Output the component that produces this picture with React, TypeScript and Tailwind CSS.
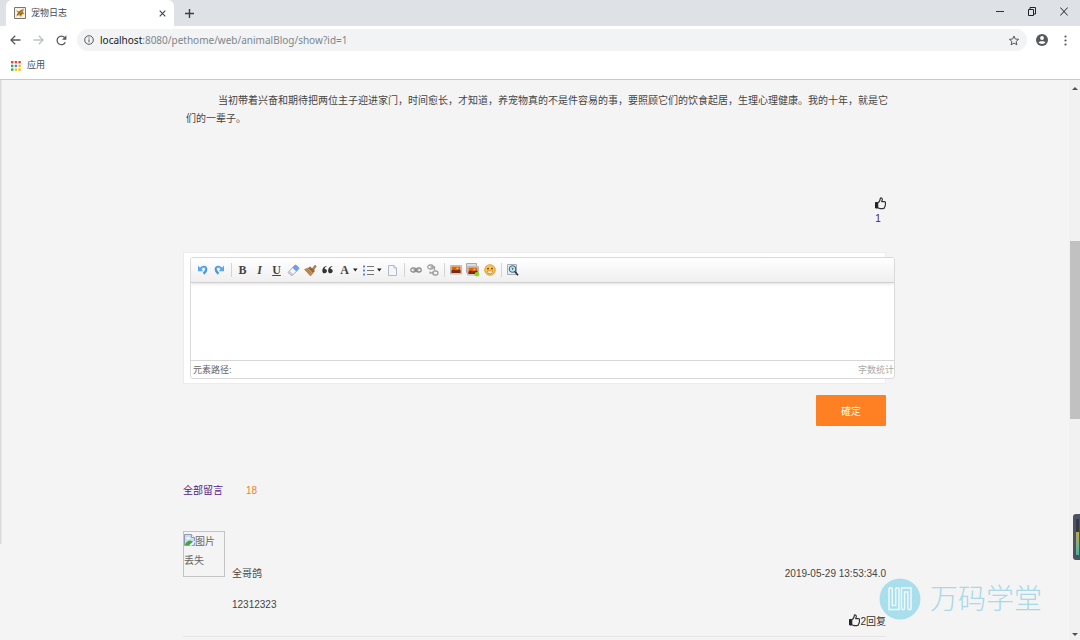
import type { ReactNode } from "react";

const APP_DOTS = ["#ea4335", "#ea4335", "#ea4335", "#34a853", "#4285f4", "#fbbc05", "#34a853", "#fbbc05", "#fbbc05"];

function ThumbUp() {
  return (
    <svg width="11" height="13" viewBox="0 0 11 13" fill="none" stroke="#333" strokeLinejoin="round" aria-hidden="true">
      <path d="M.5 5.500h2.300v5.500H.5z" fill="#222" stroke="#222" />
      <path d="M2.800 5.700C4 5.200 4.700 4 5 3L5.400 1C6.800.7 7.500 1.700 7.200 3L6.700 4.700h2.600c1.300 0 1.600 1.100 1 1.900.4.600.3 1.400-.2 1.800.2.700 0 1.300-.5 1.600 0 1-.6 1.700-1.700 1.700H6.200c-1.200 0-2.200-.5-3.400-.8" strokeWidth="1.200" />
    </svg>
  );
}

function Tool({ label, children, caret }: { label: string; children: ReactNode; caret?: boolean }) {
  return (
    <button type="button" aria-label={label} title={label} className="flex h-4 shrink-0 items-center">
      <span className="flex w-[17px] items-center justify-center">{children}</span>
      {caret && (
        <svg width="7" height="4" viewBox="0 0 7 4" aria-hidden="true">
          <path d="M0 .5h4.600L2.300 3.500z" fill="#222" />
        </svg>
      )}
    </button>
  );
}

function Separator() {
  return (
    <span className="flex w-[6px] shrink-0 justify-center">
      <span className="h-[14px] w-px bg-[#d4d4d4]" />
    </span>
  );
}

function Undo({ flip }: { flip?: boolean }) {
  return (
    <svg width="11" height="12" viewBox="0 0 11 12" className={flip ? "-scale-x-100" : ""} aria-hidden="true">
      <path d="M3.500 5C5 2.300 9 2 9.200 5.300c0 1.900-1 3.200-2.700 4.400" fill="none" stroke="#4a98e0" strokeWidth="2.400" />
      <path d="M4 4.700C5.500 2.700 8.600 2.700 8.700 5.300" fill="none" stroke="#8cc6f5" />
      <path d="M1 1.500v5.700h5.300z" fill="#5aa6ea" />
    </svg>
  );
}

function Picture() {
  return (
    <>
      <path d="M.5 1.500h11v8.500H.5z" fill="#ddd" stroke="#bbb" />
      <path d="M1.500 2.500h9v6.500h-9z" fill="#e0640f" />
      <path d="M1.500 6.500l2.500-1 2 1 1.500-1 3 .5v3h-9z" fill="#7a2d0c" />
      <circle cx="7.500" cy="4.500" r="1.100" fill="#ffc04a" />
    </>
  );
}

function EditorToolbar() {
  return (
    <div className="flex h-[25px] items-center border-b border-[#d0d0d0] bg-linear-to-b from-white to-[#efefef] pl-[3px] font-['Liberation_Serif',serif] text-xs leading-4 text-[#444] shadow-[0_1px_3px_rgba(0,0,0,0.12)]">
      <Tool label="撤销"><Undo /></Tool>
      <Tool label="重做"><Undo flip /></Tool>
      <Separator />
      <Tool label="加粗"><b>B</b></Tool>
      <Tool label="斜体"><i className="font-bold">I</i></Tool>
      <Tool label="下划线"><span className="font-bold underline">U</span></Tool>
      <Tool label="清除格式">
        <svg width="13" height="13" viewBox="0 0 13 13" aria-hidden="true">
          <path d="M1 8.500L7.500 1.500Q8.500.6 9.600 1.500L11.400 3.200Q12.200 4.200 11.400 5.200L5 11.800z" fill="#f5f6fa" stroke="#8790a5" strokeWidth=".8" />
          <path d="M5.500 3.700L7.500 1.500Q8.500.6 9.600 1.500L11.400 3.200Q12.200 4.200 11.400 5.200L9.300 7.400z" fill="#6d9ff0" />
          <path d="M1 8.500l4 3.300 1.500-1.500-4-3.400z" fill="#c9ccd4" />
        </svg>
      </Tool>
      <Tool label="格式刷">
        <svg width="13" height="13" viewBox="0 0 13 13" aria-hidden="true">
          <path d="M8 5L11 1.200l1.200 1L9.500 6.300z" fill="#bd8647" stroke="#80542a" strokeWidth=".6" />
          <path d="M6 2.500l5 4.500-2 2-5.200-4.500z" fill="#8c6848" />
          <path d="M4.200 4l5 4.700L6.500 12 .6 5.500z" fill="#d39c53" stroke="#95622b" strokeWidth=".6" />
          <path d="M3 5l4.500 4.500M2 5.600l4.300 4.600" stroke="#855321" strokeWidth=".5" />
        </svg>
      </Tool>
      <Tool label="引用">
        <svg width="11" height="8" viewBox="0 0 11 8" fill="#333" aria-hidden="true">
          <path d="M4.600.5C3.200 1 2.600 2 2.700 3c1.400-.1 2.200.8 2.200 2S4 7.300 2.700 7.300C1.200 7.300.3 6.300.3 4.700.3 2.300 2 .5 4.600.1zM10.400.5C9 1 8.400 2 8.500 3c1.400-.1 2.200.8 2.200 2s-.9 2.300-2.200 2.300C7 7.300 6.100 6.300 6.100 4.700c0-2.400 1.700-4.200 4.300-4.600z" />
        </svg>
      </Tool>
      <Tool label="字体颜色" caret><b>A</b></Tool>
      <Tool label="无序列表" caret>
        <svg width="11" height="11" viewBox="0 0 11 11" aria-hidden="true">
          <path d="M0 .5h2v2H0zM0 4.500h2v2H0zM0 8.500h2v2H0z" fill="#5b83ee" />
          <path d="M4 1.500h7M4 5.500h7M4 9.500h7" stroke="#777" />
        </svg>
      </Tool>
      <Tool label="清空文档">
        <svg width="9" height="11" viewBox="0 0 9 11" aria-hidden="true">
          <path d="M.5.5h5.500l2.500 2.500v7.500h-8z" fill="#f3f6fb" stroke="#b4b9c3" />
          <path d="M6 .5v2.500h2.500" fill="#dde2ec" stroke="#b4b9c3" />
        </svg>
      </Tool>
      <Separator />
      <Tool label="超链接">
        <svg width="12" height="6" viewBox="0 0 12 6" fill="none" stroke="#8c8c8c" strokeWidth="1.300" aria-hidden="true">
          <rect x=".8" y="1" width="5" height="4" rx="2" />
          <rect x="6.200" y="1" width="5" height="4" rx="2" />
          <path d="M3.500 3h5" />
        </svg>
      </Tool>
      <Tool label="取消链接">
        <svg width="12" height="12" viewBox="0 0 12 12" fill="none" stroke="#a0a0a0" strokeWidth="1.300" aria-hidden="true">
          <rect x=".8" y="1" width="5.400" height="4" rx="2" />
          <rect x="5.800" y="7" width="5.200" height="4" rx="2" />
          <path d="M3.500 3h4v3M3 7.500v1.500h4" />
        </svg>
      </Tool>
      <Separator />
      <Tool label="单图上传">
        <svg width="12" height="12" viewBox="0 0 12 12" aria-hidden="true"><Picture /></svg>
      </Tool>
      <Tool label="多图上传">
        <svg width="14" height="14" viewBox="0 0 14 14" aria-hidden="true">
          <path d="M.5.5h10v9H.5z" fill="#ddd" stroke="#aaa" />
          <g transform="translate(1 2)"><Picture /></g>
          <circle cx="11" cy="11.300" r="2.300" fill="#8fd61e" />
        </svg>
      </Tool>
      <Tool label="表情">
        <svg width="12" height="12" viewBox="0 0 12 12" aria-hidden="true">
          <circle cx="6" cy="6" r="5.300" fill="#fbc44e" stroke="#dc8f2c" strokeWidth=".8" />
          <circle cx="4" cy="4.600" r=".9" fill="#6b3810" />
          <circle cx="8" cy="4.600" r=".9" fill="#6b3810" />
          <path d="M3 7h6Q8.500 9.800 6 9.800T3 7z" fill="#fff" stroke="#b16a1c" strokeWidth=".6" />
        </svg>
      </Tool>
      <Separator />
      <Tool label="预览">
        <svg width="12" height="12" viewBox="0 0 12 12" aria-hidden="true">
          <path d="M.5.5h9v10h-9z" fill="#e6ecf3" stroke="#a4b0bf" />
          <circle cx="5.500" cy="5" r="3.200" fill="#cbe7f5" stroke="#4e6579" strokeWidth="1.100" />
          <path d="M4.500 3.300l2.300 1.300-1.500 2z" fill="#35845e" />
          <path d="M7.800 7.500l3.200 3.700" stroke="#333" strokeWidth="1.700" />
        </svg>
      </Tool>
    </div>
  );
}

function BrowserBar() {
  return (
    <header className="shrink-0 border-b border-[#c8c8c8] bg-white text-[#5f6368]">
      <div className="flex h-[26px] items-stretch bg-[#dee1e6] pl-[6px]">
        <div className="flex w-[168px] items-center rounded-t-md bg-white px-2">
          <svg width="12" height="12" viewBox="0 0 12 12" aria-hidden="true">
            <path d="M.5.5h11v11H.5z" fill="#f4f1e8" stroke="#777" />
            <path d="M2 3l2.500 1.200L7 3.500 10 1.500 9 5l1.500 2-2.500.5-1 2.500-2-2L2 9.500 4 6z" fill="#c18a28" />
            <path d="M8 2.500L3 8M8.500 6L6 7.500" stroke="#594427" strokeWidth=".8" />
          </svg>
          <span className="ml-[5px] grow pt-[2px] text-[9px] text-[#45494d]">宠物日志</span>
          <button type="button" aria-label="关闭标签页">
            <svg width="7" height="7" viewBox="0 0 7 7" stroke="#45494d" strokeWidth="1.200" aria-hidden="true"><path d="M.7.7l5.600 5.600M6.300.7L.7 6.300" /></svg>
          </button>
        </div>
        <button type="button" aria-label="新标签页" className="ml-[11px]">
          <svg width="9" height="9" viewBox="0 0 9 9" stroke="#3c4043" strokeWidth="1.400" aria-hidden="true"><path d="M4.500 0v9M0 4.500h9" /></svg>
        </button>
        <div className="ml-auto flex items-center pb-[3px]">
          <button type="button" aria-label="最小化" className="flex w-8 justify-center">
            <svg width="8" height="8" viewBox="0 0 8 8" stroke="#333" aria-hidden="true"><path d="M0 3.500h8" /></svg>
          </button>
          <button type="button" aria-label="还原" className="flex w-8 justify-center">
            <svg width="8" height="9" viewBox="0 0 8 9" fill="none" stroke="#222" aria-hidden="true"><path d="M.5 2.500h5v6h-5zM2 2.500v-2h5.500v6.500h-2" /></svg>
          </button>
          <button type="button" aria-label="关闭" className="flex w-8 justify-center">
            <svg width="8" height="9" viewBox="0 0 8 9" stroke="#222" aria-hidden="true"><path d="M.3.500l7.400 8M7.700.5l-7.400 8" /></svg>
          </button>
        </div>
      </div>

      <div className="flex h-[28px] items-center pr-[13px] pl-[10px]">
        <button type="button" aria-label="后退" className="mr-3">
          <svg width="11" height="10" viewBox="0 0 11 10" fill="none" stroke="#55595d" strokeWidth="1.300" aria-hidden="true"><path d="M10.500 5H1.200M5.200.8L1 5l4.200 4.200" /></svg>
        </button>
        <button type="button" aria-label="前进" className="mr-3">
          <svg width="11" height="10" viewBox="0 0 11 10" fill="none" stroke="#bdc1c6" strokeWidth="1.300" aria-hidden="true"><path d="M.5 5h9.300M5.800.8L10 5 5.800 9.200" /></svg>
        </button>
        <button type="button" aria-label="重新加载" className="mr-[10px]">
          <svg width="11" height="11" viewBox="0 0 11 11" aria-hidden="true">
            <path d="M9.300 7.200A4.300 4.300 0 1 1 8.600 2.500" fill="none" stroke="#55595d" strokeWidth="1.300" />
            <path d="M10.400.3v4.400H6z" fill="#55595d" />
          </svg>
        </button>
        <div className="flex h-[22px] grow items-center rounded-full bg-[#f1f3f4] px-[7px]">
          <svg width="10" height="10" viewBox="0 0 10 10" fill="none" stroke="#55595d" aria-hidden="true">
            <circle cx="5" cy="5" r="4.300" />
            <path d="M5 4.300v3M5 2.400v1.100" />
          </svg>
          <span className="ml-[6px] grow font-['Noto_Sans',sans-serif] text-[10px] text-[#80868b]">
            <span className="text-[#202124]">localhost</span>:8080/pethome/web/animalBlog/show?id=1
          </span>
          <button type="button" aria-label="收藏">
            <svg width="12" height="11" viewBox="0 0 12 11" fill="none" stroke="#55595d" aria-hidden="true">
              <path d="M6 1l1.300 3 3.300.3L8.100 6.500l.8 3.300L6 8.100 3.100 9.800l.8-3.300L1.400 4.300 4.700 4z" />
            </svg>
          </button>
        </div>
        <button type="button" aria-label="用户" className="ml-[9px]">
          <svg width="12" height="12" viewBox="0 0 12 12" aria-hidden="true">
            <circle cx="6" cy="6" r="6" fill="#55595d" />
            <circle cx="6" cy="4" r="1.900" fill="#fff" />
            <path d="M2.500 8.600C3.500 6.700 8.500 6.700 9.500 8.600 8 10.500 4 10.500 2.500 8.600z" fill="#fff" />
          </svg>
        </button>
        <button type="button" aria-label="菜单" className="ml-4">
          <svg width="3" height="11" viewBox="0 0 3 11" fill="#55595d" aria-hidden="true">
            <circle cx="1.500" cy="1.500" r="1.100" /><circle cx="1.500" cy="5.500" r="1.100" /><circle cx="1.500" cy="9.500" r="1.100" />
          </svg>
        </button>
      </div>

      <div className="flex h-[25px] items-center pb-[2px] pl-[11px]">
        <a href="#apps" className="flex items-center gap-[6px] text-[9px] text-[#45494d]">
          <svg width="10" height="10" viewBox="0 0 10 10" aria-hidden="true">
            {APP_DOTS.map((color, i) => (
              <rect key={i} x={(i % 3) * 3.7} y={Math.floor(i / 3) * 3.7} width="2.400" height="2.400" fill={color} />
            ))}
          </svg>
          应用
        </a>
      </div>
    </header>
  );
}

function Scrollbar() {
  return (
    <div className="relative flex w-[11px] shrink-0 flex-col items-center bg-[#f1f1f1]" aria-hidden="true">
      <svg width="6" height="3" viewBox="0 0 6 3" className="mt-[7px] shrink-0"><path d="M0 3L3 0l3 3z" fill="#505050" /></svg>
      <div className="basis-[151px]" />
      <div className="h-[178px] w-[10px] shrink-0 bg-[#c1c1c1]" />
      <svg width="6" height="3" viewBox="0 0 6 3" className="mt-auto mb-[4px] shrink-0"><path d="M0 0l3 3 3-3z" fill="#505050" /></svg>
      {/* desktop volume meter docked on the screen edge */}
      <div className="absolute right-0 bottom-[80px] h-[46px] w-[7px] rounded-l-[3px] bg-[#4d5162] py-[5px] pl-[3px]">
        <div className="h-full w-[3px] bg-linear-to-b from-[#353846] from-35% via-[#b8a94d] via-35% to-[#3fb39b]" />
      </div>
    </div>
  );
}

function Watermark() {
  return (
    <div className="pointer-events-none absolute right-[38px] bottom-[19px] flex items-center gap-[9px]">
      <svg width="42" height="42" viewBox="0 0 42 42" fill="none" aria-hidden="true">
        <circle cx="21" cy="21" r="20.500" fill="#a9dfed" />
        <path d="M10 10v21.500h10V10M13.300 10v17.500h3.400V10M10 10h3.300M16.700 10h3.300" stroke="#eefafc" strokeWidth="1.500" />
        <path d="M22.500 31.500V10h9.500v21.500M25.600 31.500V14h3.300v17.500M22.500 31.500h3.100M28.900 31.500H32" stroke="#eefafc" strokeWidth="1.500" />
      </svg>
      <span className="pt-[2px] text-[28px] leading-[42px] font-light text-[#a9d8e6]">万码学堂</span>
    </div>
  );
}

export default function App() {
  return (
    <div className="relative flex h-screen flex-col overflow-hidden bg-[#f4f4f4] font-['Liberation_Sans','Noto_Sans_CJK_SC',sans-serif] text-[10px] text-[#444]">
      <BrowserBar />
      <div className="flex min-h-0 grow">
        <div className="mb-24 w-[2px] shrink-0 bg-linear-to-r from-[#d2d2d2] to-[#eee]" />
        <main className="min-w-0 grow overflow-hidden pr-[2px]">
          <div className="mx-auto max-w-[703px]">
            <p className="-mr-1 pt-3 pl-[3px] indent-[32px] leading-[18px]">
              当初带着兴奋和期待把两位主子迎进家门，时间愈长，才知道，养宠物真的不是件容易的事，要照顾它们的饮食起居，生理心理健康。我的十年，就是它们的一辈子。
            </p>

            <div className="mt-[69px] flex justify-end">
              <a href="#like" aria-label="点赞" className="flex flex-col items-center leading-[18px] text-[#551a4b]">
                <ThumbUp />
                <span className="pr-[5px]">1</span>
              </a>
            </div>

            <form className="mt-6" onSubmit={(e) => e.preventDefault()}>
              <div className="border border-[#ececec] bg-white py-1 pl-[6px]">
                <div className="-mr-[10px] overflow-hidden rounded-[3px] border border-[#d9d9d9] bg-white">
                  <EditorToolbar />
                  <textarea aria-label="留言内容" className="block h-[77px] w-full resize-none p-2 outline-none" />
                  <div className="flex h-[18px] items-center justify-between border-t border-[#d6d6d6] pt-[2px] pl-[2px] text-[9px] text-[#666]">
                    <span>元素路径:</span>
                    <span className="text-[#aaa]">字数统计</span>
                  </div>
                </div>
              </div>
              <div className="mt-[11px] flex justify-end">
                <button type="submit" className="h-[31px] w-[70px] rounded-[1px] bg-[#ff8022] font-['Noto_Sans_CJK_TC',sans-serif] text-white">
                  確定
                </button>
              </div>
            </form>

            <h2 className="mt-14 flex gap-[23px] leading-[18px]">
              <a href="#comments" className="text-[#551a8b]">全部留言</a>
              <span className="text-[#f08030]">18</span>
            </h2>

            <article className="mt-[31px] border-b border-[#e4e4e4] pb-[6px]">
              <div className="flex items-end gap-[7px]">
                <div role="img" aria-label="图片丢失" className="h-[46px] w-[42px] border border-[#c4c4c4] leading-[19px] text-[#666]">
                  <svg width="11" height="12" viewBox="0 0 11 12" className="inline-block align-[-1px]" aria-hidden="true">
                    <path d="M.5.5h7l3 3v8H.5z" fill="#c9dcf7" stroke="#8f9bb0" />
                    <path d="M7.500.5v3h3" fill="#fff" stroke="#8f9bb0" />
                    <path d="M2 5q0-1.500 1.500-1.500Q4.500 2.500 5.500 4q1 0 1 1z" fill="#fff" />
                    <path d="M1 11q1-4 5-4.500l3 1L5 11z" fill="#43a533" />
                    <path d="M11 6.500L5.500 12H7l4-4z" fill="#fff" />
                  </svg>
                  图片丢失
                </div>
                <span className="-mb-[6px] grow leading-[18px]">全哥鸽</span>
                <time className="-mb-[6px] leading-[18px]">2019-05-29 13:53:34.0</time>
              </div>
              <p className="mt-[19px] pl-[49px] leading-[18px]">12312323</p>
              <div className="flex justify-end leading-4">
                <a href="#like-comment" className="flex items-start text-[#333]"><ThumbUp />2</a>
                <a href="#reply" className="text-[#333]">回复</a>
              </div>
            </article>
          </div>
        </main>
        <Scrollbar />
      </div>
      <Watermark />
    </div>
  );
}
